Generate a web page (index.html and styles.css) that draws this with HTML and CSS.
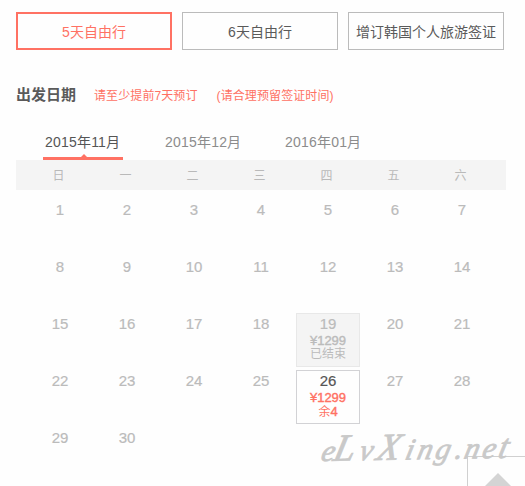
FILE: index.html
```html
<!DOCTYPE html>
<html lang="zh-CN">
  <head>
    <meta charset="utf-8" />
    <title>出发日期</title>
    <link rel="stylesheet" href="styles.css">
  </head>

  <body>
    <div class="options">
      <div class="option selected">5天自由行</div>
      <div class="option">6天自由行</div>
      <div class="option">增订韩国个人旅游签证</div>
    </div>

    <div class="heading">
      <h2>出发日期</h2>
      <span class="note">请至少提前7天预订</span>
      <span class="note">(请合理预留签证时间)</span>
    </div>

    <div class="months">
      <div class="month active">2015年11月</div>
      <div class="month">2015年12月</div>
      <div class="month">2016年01月</div>
    </div>

    <div class="weekdays">
      <span>日</span><span>一</span><span>二</span><span>三</span><span>四</span><span>五</span><span>六</span>
    </div>

    <div class="days">
      <div class="day">1</div>
      <div class="day">2</div>
      <div class="day">3</div>
      <div class="day">4</div>
      <div class="day">5</div>
      <div class="day">6</div>
      <div class="day">7</div>
      <div class="day">8</div>
      <div class="day">9</div>
      <div class="day">10</div>
      <div class="day">11</div>
      <div class="day">12</div>
      <div class="day">13</div>
      <div class="day">14</div>
      <div class="day">15</div>
      <div class="day">16</div>
      <div class="day">17</div>
      <div class="day">18</div>
      <div class="day ended">19
        <div class="price">¥1299</div>
        <div class="status">已结束</div>
      </div>
      <div class="day">20</div>
      <div class="day">21</div>
      <div class="day">22</div>
      <div class="day">23</div>
      <div class="day">24</div>
      <div class="day">25</div>
      <div class="day open">26
        <div class="price">¥1299</div>
        <div class="status">余<span class="left">4</span></div>
      </div>
      <div class="day">27</div>
      <div class="day">28</div>
      <div class="day">29</div>
      <div class="day">30</div>
    </div>

    <!-- back to top button, partly below the fold -->
    <div class="to-top">
      <svg width="26" height="13" viewBox="0 0 26 13"><path d="M13 0L26 13H0z" fill="#d4d4d4" /></svg>
    </div>
    <svg class="watermark" width="208" height="65">
      <text transform="translate(3 40) rotate(-1) skewX(-14)" x="0 12 38 55 84 96 114 134 143 161 177" y="0">e<tspan class="cap">L</tspan>v<tspan class="cap">X</tspan>ing.ne<tspan class="tall">t</tspan></text>
    </svg>
  </body>
</html>
```

FILE: styles.css
```css
* {
  box-sizing: border-box;
}
body {
  position: relative;
  width: 525px;
  height: 486px;
  margin: 0;
  padding: 12px 0 0 16px;
  overflow: hidden;
  background: #fefefe;
  color: #5a5a5a;
  font-family: "Liberation Sans", "Noto Sans CJK SC", sans-serif;
  font-size: 14px;
}
.options {
  display: flex;
  gap: 10px;
}
.option {
  width: 156px;
  height: 38px;
  border: 1px solid #bbb;
  line-height: 38px;
  text-align: center;
  white-space: nowrap;
}
.option.selected {
  border: 2px solid #ff7163;
  line-height: 36px;
  color: #ff7163;
}
.heading {
  display: flex;
  align-items: center;
  height: 30px;
  margin-top: 29px;
}
h2 {
  width: 78px;
  margin: 0;
  padding-top: 1px;
  font-size: 15px;
  line-height: 30px;
}
.note {
  margin-right: 19px;
  padding-top: 1px;
  color: #ff7163;
  font-size: 12px;
  letter-spacing: 0.1px;
}
.months {
  display: flex;
  gap: 40px;
  height: 35px;
  margin: 16px 0 0 27px;
}
.month {
  width: 80px;
  height: 35px;
  line-height: 35px;
  padding-left: 2px;
  letter-spacing: 0.2px;
  color: #8c8c8c;
}
.month.active {
  position: relative;
  border-bottom: 3px solid #ff7163;
  color: #555;
}
.month.active::after {
  content: "";
  position: absolute;
  bottom: 0;
  left: 38px;
  border: 3px solid transparent;
  border-top: 0;
  border-bottom-color: #ff7163;
}
.weekdays {
  display: grid;
  grid-template-columns: repeat(7, 67px);
  width: 490px;
  height: 30px;
  padding-left: 9px;
  background: #f4f4f4;
  color: #b9b9b9;
  font-size: 12px;
  line-height: 32px;
  text-align: center;
}
.days {
  display: grid;
  grid-template-columns: repeat(7, 64px);
  grid-auto-rows: 54px;
  gap: 3px;
  margin: 9px 0 0 12px;
}
.day {
  border: 1px solid transparent;
  color: #bbb;
  font-size: 15px;
  line-height: 20px;
  text-align: center;
  -webkit-text-stroke: 0.2px;
}
.day.ended {
  border-color: #e8e8e8;
  background: #f4f4f4;
}
.day.open {
  border-color: #d2d2d5;
  color: #555;
}
.price {
  height: 13px;
  font-size: 13px;
  line-height: 14px;
  -webkit-text-stroke: 0.4px;
}
.status {
  height: 14px;
  font-size: 12px;
  line-height: 15px;
  -webkit-text-stroke: 0;
}
.left {
  font-size: 13px;
  -webkit-text-stroke: 0.4px;
}
.open .price,
.open .status {
  color: #ff7163;
}
.to-top {
  position: absolute;
  top: 456px;
  left: 467px;
  width: 58px;
  height: 30px;
  padding: 16px 0 0 17px;
  border: 1px solid #d0d0d0;
  border-width: 1px 0 0 1px;
}
.to-top svg {
  display: block;
}
.watermark {
  position: absolute;
  top: 421px;
  left: 317px;
  fill: #c9c9c9;
  stroke: #c9c9c9;
  stroke-width: 0.8px;
  font-family: "Liberation Serif", serif;
  font-size: 30px;
  font-style: italic;
}
.watermark .cap {
  font-size: 38px;
}
.watermark .tall {
  font-size: 34px;
}
```
